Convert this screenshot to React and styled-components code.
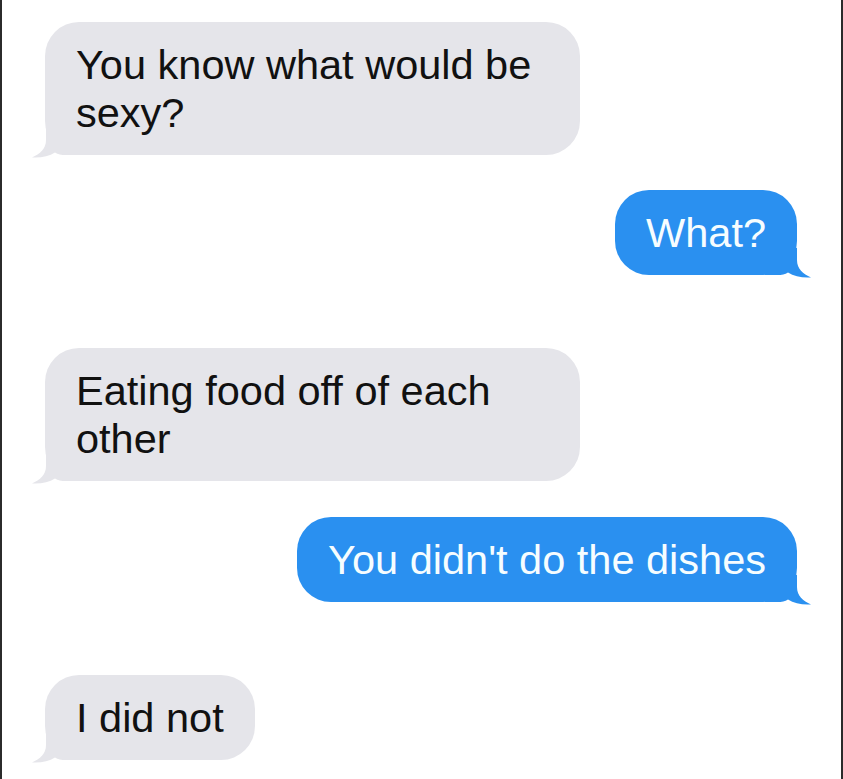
import React from "react";
import styled, { createGlobalStyle } from "styled-components";

const GlobalStyle = createGlobalStyle`
  html, body { margin: 0; padding: 0; background: #ffffff; }
  #root { min-height: 100vh; }
`;

const Page = styled.div`
  box-sizing: border-box;
  width: 843px;
  height: 779px;
  overflow: hidden;
  background: #ffffff;
  border-left: 2px solid #2b2b2b;
  border-right: 2px solid #2b2b2b;
  padding: 22px 44px 0 43px;
  display: flex;
  flex-direction: column;
  font-family: "Liberation Sans", Arial, Helvetica, sans-serif;
`;

const Row = styled.div`
  display: flex;
  justify-content: ${(p) => (p.$mine ? "flex-end" : "flex-start")};
  margin-top: ${(p) => p.$gap || 0}px;
`;

const Bubble = styled.div`
  position: relative;
  box-sizing: border-box;
  max-width: 535px;
  padding: 19px 31px 18px;
  border-radius: 34px;
  font-size: 41.5px;
  line-height: 48px;
  letter-spacing: 0;
  background: ${(p) => (p.$mine ? "#2a90f0" : "#e5e5ea")};
  color: ${(p) => (p.$mine ? "#f6fdff" : "#111111")};
`;

const Text = styled.span`
  position: relative;
  z-index: 1;
`;

const TailSvg = styled.svg`
  position: absolute;
  bottom: -3px;
  width: 46px;
  height: 30px;
  ${(p) => (p.$mine ? "right: -14px; transform: scaleX(-1);" : "left: -13px;")}
  fill: ${(p) => (p.$mine ? "#2a90f0" : "#e5e5ea")};
`;

function Tail({ mine }) {
  return (
    <TailSvg $mine={mine} viewBox="0 0 46 30" aria-hidden="true">
      <path d="M13 0 L46 0 L46 27 L34 27 C29 27 26 26.5 23 24.5 C17 28.5 9 30 0 29.5 C8 26 14 21 14 12 L14 0 Z" />
    </TailSvg>
  );
}

const messages = [
  { mine: false, gap: 0, text: "You know what would be sexy?" },
  { mine: true, gap: 35, text: "What?" },
  { mine: false, gap: 73, text: "Eating food off of each other" },
  { mine: true, gap: 36, text: "You didn't do the dishes" },
  { mine: false, gap: 73, text: "I did not" },
];

export default function App() {
  return (
    <>
      <GlobalStyle />
      <Page>
        {messages.map((m, i) => (
          <Row key={i} $mine={m.mine} $gap={m.gap}>
            <Bubble $mine={m.mine}>
              <Tail mine={m.mine} />
              <Text>{m.text}</Text>
            </Bubble>
          </Row>
        ))}
      </Page>
    </>
  );
}
